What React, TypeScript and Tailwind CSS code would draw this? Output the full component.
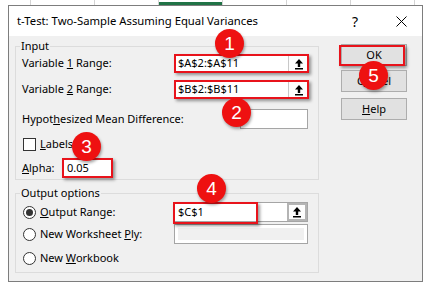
import React from "react";

const FONT = { fontFamily: '"Noto Sans", "Segoe UI", sans-serif' };

function UploadIcon() {
  return (
    <svg width="10" height="12" viewBox="0 0 10 12">
      <path d="M5 1 L9 5.5 H6.2 V9 H3.8 V5.5 H1 Z" fill="#000" />
      <rect x="1" y="10" width="8" height="1.5" fill="#000" />
    </svg>
  );
}

function RedBox({ className }: { className: string }) {
  return (
    <div
      className={`absolute border-2 border-[#e8131b] shadow-[2px_2px_3px_rgba(0,0,0,0.4)] pointer-events-none ${className}`}
    />
  );
}

function RangeField({ value, children }: { value: string; children?: React.ReactNode }) {
  return (
    <div className="relative w-[135px] h-full flex border border-[#a5a5a5] bg-white">
      <div className="flex-1 flex items-center pl-[3px] text-[11px] text-black">{value}</div>
      <div className="w-[20px] flex items-center justify-center border-l border-[#c8c8c8] bg-[#fdfdfd]">
        <UploadIcon />
      </div>
      {children}
    </div>
  );
}

function Badge({ n, className }: { n: string; className: string }) {
  return (
    <div
      className={`absolute w-[29px] h-[29px] rounded-full bg-[#ee1111] text-white flex items-center justify-center text-[19px] leading-none shadow-[1px_2px_3px_rgba(0,0,0,0.35)] ${className}`}
      style={{ fontFamily: '"Liberation Sans", Arial, sans-serif' }}
    >
      {n}
    </div>
  );
}

function Radio({ checked }: { checked?: boolean }) {
  return (
    <div className="w-[13px] h-[13px] rounded-full border border-[#333] bg-white flex items-center justify-center">
      {checked && <div className="w-[7px] h-[7px] rounded-full bg-[#333]" />}
    </div>
  );
}

function Btn({ children }: { children: React.ReactNode }) {
  return (
    <div className="relative w-[66px] h-[22px] bg-[#e1e1e1] border border-[#adadad] flex items-center justify-center text-[11px] text-black">
      {children}
    </div>
  );
}

export default function App() {
  return (
    <div className="relative w-[435px] h-[296px] bg-white overflow-hidden text-black" style={FONT}>
      {/* excel header strip */}
      <div className="flex h-[5px]">
        <div className="w-[31px] border-r border-[#d4d4d4]" />
        <div className="w-[64px] border-r border-[#d4d4d4]" />
        <div className="w-[64px] border-r border-[#d4d4d4]" />
        <div className="w-[64px] border-r border-[#d4d4d4] flex flex-col">
          <div className="mt-auto h-[3px] bg-[#217346]" />
        </div>
        <div className="w-[64px] border-r border-[#d4d4d4]" />
        <div className="w-[64px] border-r border-[#d4d4d4]" />
        <div className="w-[64px] border-r border-[#d4d4d4]" />
      </div>

      {/* dialog */}
      <div className="ml-[8px] w-[415px] h-[277px] border border-[#7d7d7d] bg-[#f0f0f0] flex flex-col">
        <div className="h-[30px] bg-white flex items-center pl-[8px] text-[11.3px]">
          <span>t-Test: Two-Sample Assuming Equal Variances</span>
          <span className="ml-auto mr-[38px] text-[14px]">?</span>
          <svg width="11" height="11" viewBox="0 0 11 11" className="mr-[15px]">
            <path d="M0.5 0.5 L10.5 10.5 M10.5 0.5 L0.5 10.5" stroke="#000" strokeWidth="1" />
          </svg>
        </div>

        <div className="flex-1 flex">
          {/* left column */}
          <div className="ml-[6px] w-[304px] flex flex-col">
            {/* Input group */}
            <div className="relative mt-[10px] h-[134px] border border-[#dcdcdc] flex flex-col text-[11px]">
              <span className="absolute left-[4px] -top-[9px] px-[1px] bg-[#f0f0f0] leading-[16px]">Input</span>
              <div className="mt-[7px] h-[19px] flex items-center">
                <span className="pl-[6px]">Variable <u>1</u> Range:</span>
                <div className="ml-auto mr-[9px] h-full">
                  <RangeField value="$A$2:$A$11">
                    <RedBox className="-inset-[1px]" />
                  </RangeField>
                </div>
              </div>
              <div className="mt-[7px] h-[19px] flex items-center">
                <span className="pl-[6px]">Variable <u>2</u> Range:</span>
                <div className="ml-auto mr-[9px] h-full">
                  <RangeField value="$B$2:$B$11">
                    <RedBox className="-inset-[1px]" />
                  </RangeField>
                </div>
              </div>
              <div className="mt-[10px] h-[20px] flex items-center">
                <span className="pl-[6px]">Hypot<u>h</u>esized Mean Difference:</span>
                <div className="ml-auto mr-[10px] w-[68px] h-full border border-[#a5a5a5] bg-white" />
              </div>
              <div className="mt-[9px] h-[13px] flex items-center gap-[4px] pl-[7px]">
                <div className="w-[13px] h-[13px] border border-[#333] bg-white" />
                <span><u>L</u>abels</span>
              </div>
              <div className="mt-[7px] h-[20px] flex items-center">
                <span className="pl-[6px] w-[46px]"><u>A</u>lpha:</span>
                <div className="relative w-[51px] h-full border border-[#a5a5a5] bg-white flex items-center pl-[4px]">
                  0.05
                  <RedBox className="-inset-[1px]" />
                </div>
              </div>
            </div>

            {/* Output group */}
            <div className="relative mt-[13px] h-[80px] border border-[#dcdcdc] flex flex-col text-[11px]">
              <span className="absolute left-[4px] -top-[9px] px-[1px] bg-[#f0f0f0] leading-[16px]">Output options</span>
              <div className="mt-[8px] h-[20px] flex items-center pl-[7px] gap-[4px]">
                <Radio checked />
                <span><u>O</u>utput Range:</span>
                <div className="relative ml-auto mr-[10px] w-[135px] h-full flex border border-[#a5a5a5] bg-white">
                  <div className="flex-1 flex items-center pl-[4px]">$C$1</div>
                  <div className="w-[20px] flex items-center justify-center border-2 border-[#b4b4b4] bg-[#fdfdfd]">
                    <UploadIcon />
                  </div>
                  <div className="absolute -left-[1px] -top-[1px] w-[85px] h-[22px] border-2 border-[#e8131b] shadow-[2px_2px_3px_rgba(0,0,0,0.4)]" />
                </div>
              </div>
              <div className="mt-[2px] h-[20px] flex items-center pl-[7px] gap-[4px]">
                <Radio />
                <span>New Worksheet <u>P</u>ly:</span>
                <div className="ml-auto mr-[10px] w-[134px] h-full border border-[#a5a5a5] bg-white p-[3px]">
                  <div className="w-full h-full bg-[#f0f0f0]" />
                </div>
              </div>
              <div className="mt-[5px] h-[19px] flex items-center pl-[7px] gap-[4px]">
                <Radio />
                <span>New <u>W</u>orkbook</span>
              </div>
            </div>
          </div>

          {/* buttons */}
          <div className="ml-[22px] mt-[8px] flex flex-col">
            <Btn>
              OK
              <div className="absolute -left-[3px] top-0 w-[66px] h-[21px] border-2 border-[#e8131b] shadow-[2px_2px_3px_rgba(0,0,0,0.4)]" />
            </Btn>
            <div className="mt-[4px]">
              <Btn>C<u>a</u>ncel</Btn>
            </div>
            <div className="mt-[6px]">
              <Btn><u>H</u>elp</Btn>
            </div>
          </div>
        </div>
      </div>

      <Badge n="1" className="left-[215px] top-[29px]" />
      <Badge n="2" className="left-[222px] top-[98px]" />
      <Badge n="3" className="left-[72px] top-[132px]" />
      <Badge n="4" className="left-[197px] top-[174px]" />
      <Badge n="5" className="left-[359px] top-[61px]" />
    </div>
  );
}
